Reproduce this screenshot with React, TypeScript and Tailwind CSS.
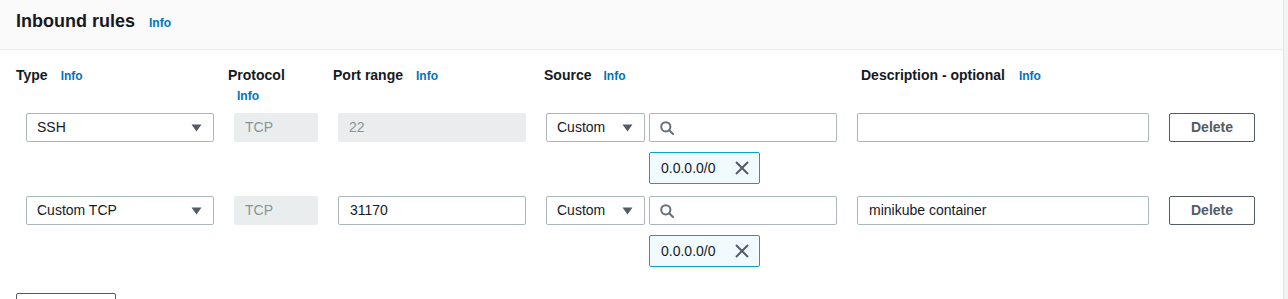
import React from 'react';

type Rule = {
  type: string;
  port: string;
  portDisabled: boolean;
  description: string;
};

const rules: Rule[] = [
  { type: 'SSH', port: '22', portDisabled: true, description: '' },
  { type: 'Custom TCP', port: '31170', portDisabled: false, description: 'minikube container' },
];

const Info: React.FC<{ className?: string }> = ({ className = '' }) => (
  <a className={`text-[12px] font-bold text-[#0073bb] ${className}`}>Info</a>
);

const Caret = () => (
  <svg width="11" height="8" viewBox="0 0 11 8" className="shrink-0">
    <path d="M0.5 0.5h10L5.5 7.5z" fill="#545b64" />
  </svg>
);

const SearchIcon = () => (
  <svg width="14" height="14" viewBox="0 0 14 14" fill="none" stroke="#687078" strokeWidth="2">
    <circle cx="5.8" cy="5.8" r="4.6" />
    <path d="M9.2 9.2l3.8 3.8" strokeLinecap="round" />
  </svg>
);

const CloseIcon = () => (
  <svg width="14" height="14" viewBox="0 0 14 14" fill="none" stroke="#545b64" strokeWidth="2">
    <path d="M1 1l12 12M13 1L1 13" />
  </svg>
);

const Select: React.FC<{ value: string; width: string }> = ({ value, width }) => (
  <div
    className={`${width} h-[29px] border border-[#aab7b8] rounded-[2px] bg-white flex items-center justify-between pl-[10px] pr-[11px] text-[14px] text-[#16191f]`}
  >
    <span>{value}</span>
    <Caret />
  </div>
);

const RuleRow: React.FC<{ rule: Rule }> = ({ rule }) => (
  <div className="flex items-start pl-[26px]">
    <Select value={rule.type} width="w-[188px]" />
    <div className="w-[84px] h-[29px] ml-[20px] rounded-[2px] bg-[#eaeded] flex items-center pl-[11px] text-[14px] text-[#879596]">
      TCP
    </div>
    <div
      className={`w-[188px] h-[29px] ml-[20px] rounded-[2px] flex items-center pl-[11px] text-[14px] ${
        rule.portDisabled
          ? 'bg-[#eaeded] text-[#879596]'
          : 'bg-white border border-[#aab7b8] text-[#16191f]'
      }`}
    >
      {rule.port}
    </div>
    <div className="ml-[20px] flex flex-col">
      <div className="flex gap-[4px]">
        <Select value="Custom" width="w-[99px]" />
        <div className="w-[188px] h-[29px] border border-[#aab7b8] rounded-[2px] bg-white flex items-center pl-[10px]">
          <SearchIcon />
        </div>
      </div>
      <div className="ml-[103px] mt-[10px] w-[111px] h-[32px] border border-[#0aa1c9] rounded-[2px] bg-[#f1faff] flex items-center justify-between pl-[11px] pr-[10px] text-[14px] text-[#16191f]">
        <span>0.0.0.0/0</span>
        <CloseIcon />
      </div>
    </div>
    <div className="w-[292px] h-[29px] ml-[20px] border border-[#aab7b8] rounded-[2px] bg-white flex items-center pl-[11px] text-[14px] text-[#16191f]">
      {rule.description}
    </div>
    <button className="w-[86px] h-[29px] ml-[20px] border border-[#545b64] rounded-[2px] bg-white text-[14px] font-bold text-[#545b64]">
      Delete
    </button>
  </div>
);

export default function App() {
  return (
    <div className="w-full h-[299px] overflow-hidden bg-[#f2f3f3] font-['Liberation_Sans',Arial,sans-serif]">
      <div className="w-[1284px] h-full bg-white border-r border-[#e1e4e4]">
        <div className="h-[50px] bg-[#fafafa] border-b border-[#eaeded] pl-[16px] pt-[10px] flex items-baseline">
          <h2 className="text-[18px] leading-[22px] font-bold text-[#16191f]">Inbound rules</h2>
          <Info className="ml-[14px]" />
        </div>

        <div className="flex mt-[15px] text-[14px] leading-[21px] font-bold text-[#16191f]">
          <div className="w-[228px] pl-[16px] flex items-baseline">
            Type <Info className="ml-[13px]" />
          </div>
          <div className="w-[105px] flex flex-col items-start">
            <span>Protocol</span>
            <Info className="ml-[9px] leading-[21px]" />
          </div>
          <div className="w-[211px] flex items-baseline">
            Port range <Info className="ml-[13px]" />
          </div>
          <div className="w-[317px] flex items-baseline">
            Source <Info className="ml-[12px]" />
          </div>
          <div className="flex items-baseline">
            Description - optional <Info className="ml-[14px]" />
          </div>
        </div>

        <div className="mt-[6px] flex flex-col gap-[12px]">
          {rules.map((r) => (
            <RuleRow key={r.type} rule={r} />
          ))}
        </div>

        <button
          aria-label="Add rule"
          className="ml-[16px] mt-[26px] w-[100px] h-[29px] border border-[#545b64] rounded-[2px] bg-white"
        />
      </div>
    </div>
  );
}
